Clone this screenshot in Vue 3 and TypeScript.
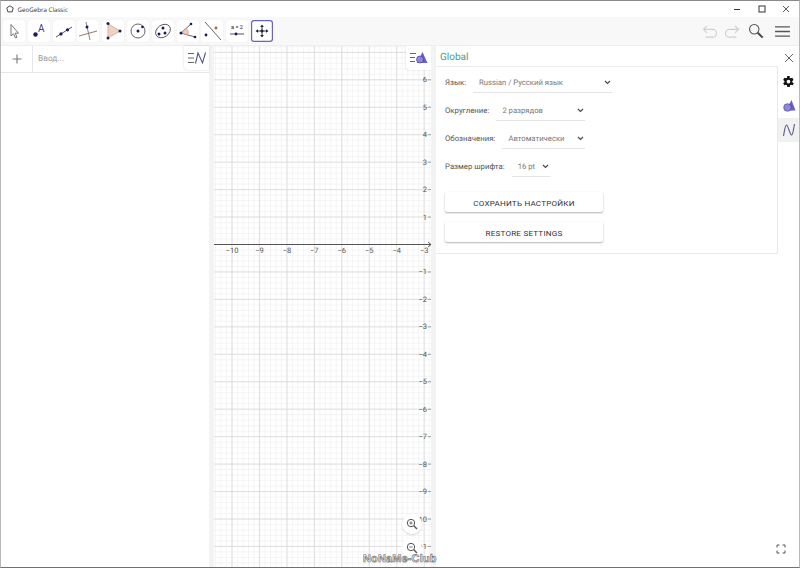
<script setup lang="ts">
const W = 217;
const H = 522;
const X0 = 232 - 214;
const Y0 = 198.5;
const STEP = 27.45;

const range = (from: number, to: number) =>
  Array.from({ length: to - from + 1 }, (_, i) => from + i);

const minorX = range(-5, 40).map((i) => X0 + (i * STEP) / 5);
const minorY = range(-40, 70).map((i) => Y0 + (i * STEP) / 5);
const majorX = range(-1, 8).map((i) => X0 + i * STEP);
const majorY = range(-7, 12).map((i) => Y0 + i * STEP);
const xLabels = range(-10, -3).map((v) => ({ v, x: X0 + (v + 10) * STEP }));
const yLabels = range(-11, 6)
  .filter((v) => v !== 0)
  .map((v) => ({ v, y: Y0 - v * STEP }));

const fmt = (v: number) => (v < 0 ? `\u2212${-v}` : `${v}`);

const settings = [
  { label: 'Язык:', value: 'Russian / Русский язык', width: 139 },
  { label: 'Округление:', value: '2 разрядов', width: 89 },
  { label: 'Обозначения:', value: 'Автоматически', width: 83 },
  { label: 'Размер шрифта:', value: '16 pt', width: 38 }
];
</script>

<template>
  <div class="window">
    <header class="titlebar">
      <svg class="app-icon" viewBox="0 0 10 10" width="8" height="8">
        <path d="M5 1 9 3.6 7.7 8.6H2.3L1 3.6Z" fill="none" stroke="#444" stroke-width="1.2" />
      </svg>
      <span class="app-title">GeoGebra Classic</span>
      <div class="win-controls">
        <svg viewBox="0 0 10 10" width="10" height="10"><path d="M2 5.5H8" stroke="#333" /></svg>
        <svg viewBox="0 0 10 10" width="10" height="10"><rect x="2" y="2" width="6" height="6" fill="none" stroke="#333" /></svg>
        <svg viewBox="0 0 10 10" width="10" height="10"><path d="M2 2 8 8M8 2 2 8" stroke="#333" stroke-width="0.8" /></svg>
      </div>
    </header>

    <nav class="toolbar">
      <button class="tool">
        <svg viewBox="0 0 22 22"><path d="M8 4.5V16L10.5 13.8 12.5 18 14 17.3 12.2 13.2H15.5Z" fill="#fff" stroke="#666" stroke-width="0.9" /></svg>
      </button>
      <button class="tool">
        <svg viewBox="0 0 22 22"><circle cx="7.5" cy="14.5" r="2.2" fill="#1a1a5c" /><text x="10" y="11.5" class="tool-a">A</text></svg>
      </button>
      <button class="tool">
        <svg viewBox="0 0 22 22"><path d="M3 17 19 7" stroke="#444" stroke-width="0.9" /><circle cx="8" cy="13.9" r="1.6" fill="#1a1a5c" /><circle cx="14.5" cy="9.8" r="1.6" fill="#1a1a5c" /></svg>
      </button>
      <button class="tool">
        <svg viewBox="0 0 22 22"><path d="M9 2 13 20" stroke="#777" stroke-width="0.9" /><path d="M2 16 20 11" stroke="#8a6a60" stroke-width="0.9" /><circle cx="10" cy="7" r="1.5" fill="#1a1a5c" /></svg>
      </button>
      <button class="tool">
        <svg viewBox="0 0 22 22"><path d="M6 3.5 18 11 6 18Z" fill="#f0d2be" stroke="#c9a898" stroke-width="0.8" /><circle cx="6" cy="3.5" r="1.5" fill="#1a1a5c" /><circle cx="18" cy="11" r="1.5" fill="#1a1a5c" /><circle cx="6" cy="18" r="1.5" fill="#1a1a5c" /></svg>
      </button>
      <button class="tool">
        <svg viewBox="0 0 22 22"><circle cx="11" cy="11" r="7" fill="none" stroke="#555" stroke-width="0.9" /><circle cx="11" cy="11" r="1.5" fill="#1a1a5c" /><circle cx="15.5" cy="7" r="1.3" fill="#1a1a5c" /></svg>
      </button>
      <button class="tool">
        <svg viewBox="0 0 22 22"><ellipse cx="11" cy="11" rx="8" ry="6" transform="rotate(-35 11 11)" fill="none" stroke="#555" stroke-width="0.9" /><circle cx="7" cy="14" r="1.5" fill="#1a1a5c" /><circle cx="11" cy="8" r="1.5" fill="#1a1a5c" /><circle cx="13" cy="13" r="1.5" fill="#1a1a5c" /></svg>
      </button>
      <button class="tool">
        <svg viewBox="0 0 22 22"><path d="M4 13 14 4M4 13 18 17" stroke="#555" stroke-width="0.9" /><path d="M9.5 8.2A7 7 0 0 1 11 15L4 13Z" fill="#f0c8c0" stroke="#d08080" stroke-width="0.5" /><circle cx="4" cy="13" r="1.5" fill="#1a1a5c" /><circle cx="14" cy="4" r="1.3" fill="#1a1a5c" /><circle cx="18" cy="17" r="1.3" fill="#1a1a5c" /></svg>
      </button>
      <button class="tool">
        <svg viewBox="0 0 22 22"><path d="M4 2 20 20" stroke="#555" stroke-width="0.9" /><circle cx="15" cy="8" r="1.4" fill="#b5651d" /><circle cx="5" cy="15" r="1.4" fill="#1a1a5c" /></svg>
      </button>
      <button class="tool">
        <svg viewBox="0 0 22 22"><text x="11" y="9" class="tool-eq">a = 2</text><path d="M4 14H18" stroke="#444" stroke-width="0.9" /><circle cx="10" cy="14" r="1.4" fill="#1a1a5c" /></svg>
      </button>
      <button class="tool selected">
        <svg viewBox="0 0 22 22"><path d="M11 6V16M6 11H16" stroke="#222" stroke-width="0.9" /><path d="M11 4.5 9.2 7H12.8ZM11 17.5 9.2 15H12.8ZM4.5 11 7 9.2V12.8ZM17.5 11 15 9.2V12.8Z" fill="#222" /><circle cx="11" cy="11" r="1.5" fill="#1a1a5c" /></svg>
      </button>

      <div class="toolbar-right">
        <svg viewBox="0 0 18 15" width="16" height="13"><path d="M5.5 1 1.5 5 5.5 9M1.5 5H12A4.5 4.5 0 0 1 12 14H4" fill="none" stroke="#cfcfcf" stroke-width="1.3" /></svg>
        <svg class="redo" viewBox="0 0 18 15" width="16" height="13"><path d="M12.5 1 16.5 5 12.5 9M16.5 5H6A4.5 4.5 0 0 0 6 14H14" fill="none" stroke="#cfcfcf" stroke-width="1.3" /></svg>
        <svg class="search" viewBox="0 0 18 18" width="16" height="16"><circle cx="7" cy="7" r="5.3" fill="none" stroke="#555" stroke-width="1.2" /><path d="M11 11 16.5 16.5" stroke="#444" stroke-width="2.2" /></svg>
        <svg class="menu" viewBox="0 0 16 14" width="15" height="13"><path d="M0 2H16M0 7H16M0 12H16" stroke="#555" stroke-width="1.5" /></svg>
      </div>
    </nav>

    <main class="workspace">
      <section class="algebra">
        <div class="input-row">
          <div class="plus-cell">
            <svg viewBox="0 0 10 10" width="10" height="10"><path d="M5 0.5V9.5M0.5 5H9.5" stroke="#777" stroke-width="1.1" /></svg>
          </div>
          <div class="input-hint">Ввод...</div>
        </div>
        <button class="style-btn">
          <svg viewBox="0 0 20 14" width="20" height="14">
            <path d="M1 2.5H7M1 7H7M1 11.5H7" stroke="#555" stroke-width="0.9" />
            <path d="M8.5 12.5 11 2 15.5 12 18.5 1.5" fill="none" stroke="#55558a" stroke-width="1.1" />
          </svg>
        </button>
      </section>

      <div class="splitter"></div>

      <section class="graphics">
        <svg class="plot" :viewBox="`0 0 ${W} ${H}`" :width="W" :height="H">
          <line v-for="x in minorX" :key="`mx${x}`" :x1="x" :x2="x" y1="0" :y2="H" class="minor" />
          <line v-for="y in minorY" :key="`my${y}`" :y1="y" :y2="y" x1="0" :x2="W" class="minor" />
          <line v-for="x in majorX" :key="`Mx${x}`" :x1="x" :x2="x" y1="0" :y2="H" class="major" />
          <line v-for="y in majorY" :key="`My${y}`" :y1="y" :y2="y" x1="0" :x2="W" class="major" />
          <line x1="0" :x2="W" :y1="Y0" :y2="Y0" class="axis" />
          <path :d="`M${W - 3} ${Y0 - 2.5}L${W} ${Y0}L${W - 3} ${Y0 + 2.5}`" class="arrow" />
          <text v-for="l in xLabels" :key="l.v" :x="l.x" :y="Y0 + 8.5" class="num" text-anchor="middle">{{ fmt(l.v) }}</text>
          <template v-for="l in yLabels" :key="l.v">
            <text :x="W - 4" :y="l.y + 2.5" class="num" text-anchor="end">{{ fmt(l.v) }}</text>
            <line :x1="W - 3" :x2="W" :y1="l.y" :y2="l.y" class="tick" />
          </template>
        </svg>
        <button class="style-btn">
          <svg viewBox="0 0 20 14" width="20" height="14">
            <path d="M1 2.5H7M1 6.5H6M1 10.5H6" stroke="#555" stroke-width="0.9" />
            <path d="M13.5 1 18.5 12H8Z" fill="#6a60c4" />
            <circle cx="11" cy="8.5" r="3.5" fill="#8f86dd" stroke="#3c3590" stroke-width="0.6" />
          </svg>
        </button>
        <div class="zoom-btn zoom-in">
          <svg viewBox="0 0 12 12" width="12" height="12"><circle cx="5" cy="5" r="3.7" fill="none" stroke="#555" /><path d="M7.8 7.8 11 11" stroke="#555" stroke-width="1.4" /><path d="M3.3 5H6.7M5 3.3V6.7" stroke="#555" stroke-width="0.8" /></svg>
        </div>
        <div class="zoom-btn zoom-out">
          <svg viewBox="0 0 12 12" width="12" height="12"><circle cx="5" cy="5" r="3.7" fill="none" stroke="#555" /><path d="M7.8 7.8 11 11" stroke="#555" stroke-width="1.4" /><path d="M3.3 5H6.7" stroke="#555" stroke-width="0.8" /></svg>
        </div>
      </section>

      <div class="splitter"></div>

      <section class="settings">
        <div class="settings-main">
          <div class="tabs"><span class="tab">Global</span></div>
          <div class="panel">
            <div v-for="s in settings" :key="s.label" class="field">
              <span class="field-label">{{ s.label }}</span>
              <div class="select" :style="{ width: `${s.width}px` }">
                <span class="select-value">{{ s.value }}</span>
                <svg viewBox="0 0 8 6" width="7" height="5"><path d="M1 1.2 4 4.2 7 1.2" fill="none" stroke="#444" stroke-width="1.3" /></svg>
              </div>
            </div>
            <div class="actions">
              <button class="action">Сохранить настройки</button>
              <button class="action">Restore settings</button>
            </div>
          </div>
        </div>

        <aside class="side">
          <div class="side-close">
            <svg viewBox="0 0 10 10" width="10" height="10"><path d="M1 1 9 9M9 1 1 9" stroke="#555" stroke-width="0.9" /></svg>
          </div>
          <div class="side-item">
            <svg viewBox="0 0 24 24" width="15" height="15"><path fill="#111" d="M19.4 13a7.5 7.5 0 0 0 0-2l2.1-1.6-2-3.5-2.5 1a7.5 7.5 0 0 0-1.7-1L15.4 3.2h-4l-.4 2.7a7.5 7.5 0 0 0-1.7 1l-2.5-1-2 3.5L6.9 11a7.5 7.5 0 0 0 0 2l-2.1 1.6 2 3.5 2.5-1a7.5 7.5 0 0 0 1.7 1l.4 2.7h4l.4-2.7a7.5 7.5 0 0 0 1.7-1l2.5 1 2-3.5ZM13.4 15a3 3 0 1 1 0-6 3 3 0 0 1 0 6Z" transform="translate(-1.4 0)" /></svg>
          </div>
          <div class="side-item">
            <svg viewBox="0 0 14 14" width="14" height="14"><path d="M9.5 1 13.5 11.5H4Z" fill="#6a60c4" /><circle cx="5.5" cy="8.5" r="3.8" fill="#8f86dd" stroke="#3c3590" stroke-width="0.6" /></svg>
          </div>
          <div class="side-item active">
            <svg viewBox="0 0 14 14" width="14" height="14"><path d="M1.5 13C2.5 8 3 2 4.5 2S8 12 9.5 12 11.5 6 12.5 1" fill="none" stroke="#5a5a8e" stroke-width="1.1" /></svg>
          </div>
        </aside>

        <svg class="fullscreen" viewBox="0 0 10 10" width="10" height="10"><path d="M1 3.5V1H3.5M6.5 1H9V3.5M9 6.5V9H6.5M3.5 9H1V6.5" fill="none" stroke="#555" /></svg>
      </section>
    </main>

    <div class="watermark">NoNaMe-Club</div>
  </div>
</template>

<style scoped>
.window {
  position: relative;
  display: flex;
  flex-direction: column;
  width: 800px;
  height: 568px;
  box-sizing: border-box;
  border: 1px solid #b8b8b8;
  border-top-color: #8a8a8a;
  border-bottom-color: #707070;
  background: #fff;
  font-family: Roboto, "Liberation Sans", sans-serif;
  text-rendering: geometricPrecision;
  overflow: hidden;
}

.titlebar {
  display: flex;
  align-items: center;
  height: 16px;
  padding-left: 5px;
  flex: none;
}

.app-icon {
  margin-right: 3.5px;
}

.app-title {
  font-family: "Open Sans", "Liberation Sans", sans-serif;
  font-size: 6.2px;
  color: #333;
}

.win-controls {
  display: flex;
  gap: 14.5px;
  margin-left: auto;
  margin-right: 8px;
}

.toolbar {
  display: flex;
  align-items: center;
  gap: 2.8px;
  height: 29px;
  flex: none;
  padding-left: 2px;
  background: #f8f8f8;
  box-sizing: border-box;
  border-bottom: 1px solid #eee;
}

.tool {
  width: 22px;
  height: 22px;
  padding: 0;
  border: 0;
  border-radius: 3px;
  background: #fff;
  box-shadow: 0 0 1px rgba(0, 0, 0, 0.1);
}

.tool svg {
  display: block;
  width: 22px;
  height: 22px;
}

.tool.selected {
  box-shadow: inset 0 0 0 1.2px #6a64b4;
}

.tool-a {
  font: 10px Roboto, sans-serif;
  fill: #4338a0;
}

.tool-eq {
  font: 5.5px Roboto, sans-serif;
  fill: #222;
  text-anchor: middle;
}

.toolbar-right {
  display: flex;
  align-items: center;
  margin-left: auto;
  margin-right: 9px;
}

.redo {
  margin-left: 6px;
}

.search {
  margin-left: 8px;
}

.menu {
  margin-left: 11px;
}

.workspace {
  display: flex;
  flex: 1;
  min-height: 0;
}

.splitter {
  width: 5px;
  flex: none;
  background: #f3f3f3;
}

.algebra {
  position: relative;
  width: 208px;
  flex: none;
}

.input-row {
  display: flex;
  height: 26px;
  border-bottom: 1px solid #e6e6e6;
}

.plus-cell {
  display: flex;
  align-items: center;
  justify-content: center;
  width: 31px;
  border-right: 1px solid #e6e6e6;
}

.input-hint {
  padding-left: 5px;
  font-size: 8.3px;
  line-height: 27px;
  color: #9a9a9a;
}

.style-btn {
  position: absolute;
  top: 0;
  right: 0;
  display: flex;
  align-items: center;
  justify-content: center;
  width: 25px;
  height: 24px;
  padding: 0;
  border: 0;
  border-radius: 0 0 0 4px;
  background: #fff;
  box-shadow: 0 0 2px rgba(0, 0, 0, 0.2);
}

.graphics {
  position: relative;
  width: 217px;
  flex: none;
  overflow: hidden;
}

.plot {
  display: block;
}

.minor {
  stroke: #f1f1f1;
  stroke-width: 0.7;
}

.major {
  stroke: #d9d9d9;
  stroke-width: 0.8;
}

.axis,
.arrow {
  stroke: #444;
  stroke-width: 0.9;
  fill: none;
}

.tick {
  stroke: #777;
  stroke-width: 0.6;
}

.num {
  font: 7.5px Roboto, sans-serif;
  fill: #555;
}

.zoom-btn {
  position: absolute;
  right: 9px;
  display: flex;
  align-items: center;
  justify-content: center;
  width: 20px;
  height: 20px;
  border-radius: 50%;
  background: #fff;
}

.zoom-in {
  top: 468px;
  box-shadow: 0 1px 2px rgba(0, 0, 0, 0.15);
}

.zoom-out {
  top: 492px;
}

.settings {
  position: relative;
  display: flex;
  flex: 1;
  min-width: 0;
}

.settings-main {
  width: 342px;
  flex: none;
}

.tabs {
  display: flex;
  height: 21px;
  padding-top: 2px;
  box-sizing: border-box;
  border-bottom: 1px solid #ececec;
}

.tab {
  width: 34px;
  padding-left: 4px;
  box-sizing: border-box;
  font-size: 10px;
  line-height: 20px;
  color: #4f9a82;
  background: #fff;
  border-radius: 2px 2px 0 0;
  box-shadow: 0 0 1px rgba(0, 0, 0, 0.15);
}

.panel {
  display: flex;
  flex-direction: column;
  height: 187px;
  box-sizing: border-box;
  padding: 1px 8px 0 9px;
  border-right: 1px solid #e8e8e8;
  border-bottom: 1px solid #e8e8e8;
}

.field {
  display: flex;
  align-items: center;
  height: 28px;
  gap: 7px;
  font-size: 7.8px;
}

.field-label {
  padding-top: 1px;
  color: #555;
}

.select {
  display: flex;
  align-items: center;
  justify-content: space-between;
  box-sizing: border-box;
  height: 20px;
  margin-top: 1px;
  padding: 0 1px 0 6px;
  border-bottom: 1px solid #e4e4e4;
  font-size: 7.7px;
  color: #777;
}

.select-value {
  padding-top: 1px;
}

.actions {
  display: flex;
  flex-direction: column;
  gap: 10px;
  margin-top: 12px;
}

.action {
  width: 158px;
  height: 20px;
  padding: 1px 0 0;
  border: 0;
  border-radius: 2px;
  background: #fff;
  box-shadow: 0 1px 2px rgba(0, 0, 0, 0.3);
  font-family: inherit;
  font-size: 8.1px;
  letter-spacing: 0.2px;
  text-transform: uppercase;
  color: #333;
}

.side {
  display: flex;
  flex-direction: column;
  flex: 1;
}

.side-close {
  display: flex;
  align-items: center;
  justify-content: center;
  height: 23px;
}

.side-item {
  display: flex;
  align-items: center;
  justify-content: center;
  height: 24px;
}

.side-item:nth-child(3) {
  height: 25px;
}

.side-item.active {
  background: #f1f1f1;
}

.fullscreen {
  position: absolute;
  right: 13px;
  bottom: 13px;
}

.watermark {
  position: absolute;
  left: 362px;
  bottom: 2px;
  font-family: "Liberation Sans", sans-serif;
  font-size: 10.9px;
  font-weight: 700;
  letter-spacing: 0.2px;
  color: #fff;
  -webkit-text-stroke: 0.7px #777;
}
</style>
